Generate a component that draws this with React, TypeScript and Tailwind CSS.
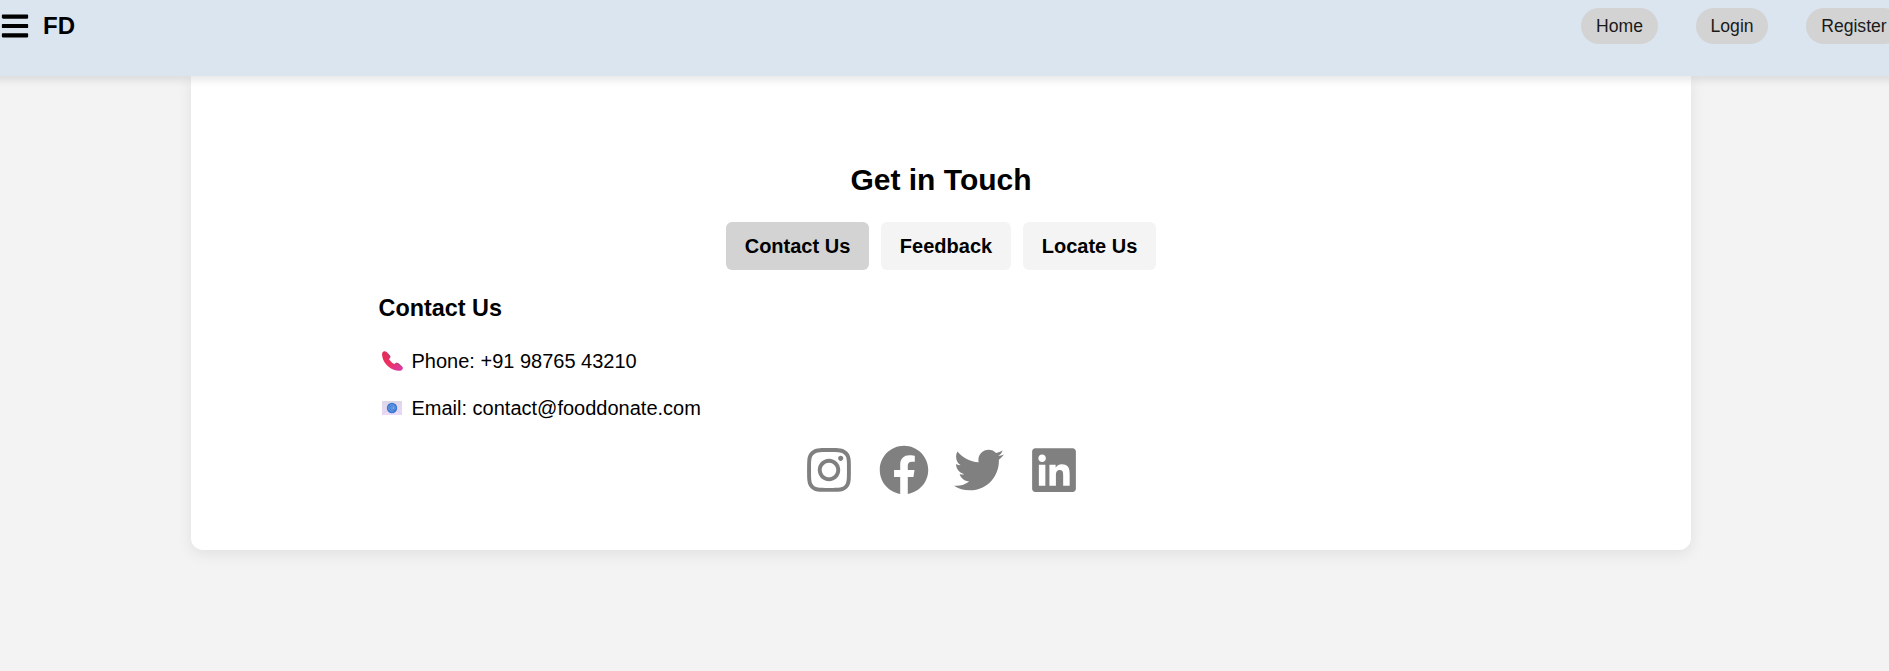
import { FaBars, FaFacebook, FaInstagram, FaLinkedin, FaTwitter } from "react-icons/fa";

const navLinks = ["Home", "Login", "Register"];

const tabs = [
  { label: "Contact Us", box: "w-[143px] bg-[#d3d3d3]" },
  { label: "Feedback", box: "w-[130px] bg-[#f4f4f4]" },
  { label: "Locate Us", box: "w-[133px] bg-[#f4f4f4]" },
];

function PhoneIcon() {
  return (
    <svg width="21" height="20" viewBox="0 0 20 20" preserveAspectRatio="none">
      <defs>
        <linearGradient id="phone" x1="0" y1="0" x2="1" y2="1">
          <stop offset="0" stopColor="#e02a55" />
          <stop offset="0.5" stopColor="#ee3163" />
          <stop offset="1" stopColor="#d63cae" />
        </linearGradient>
      </defs>
      <path
        d="M.6 1.2C1.6-.1 3.4-.1 4.6 1.3L7.4 4.6C8.2 5.6 8 6.6 7.2 7.4L6.6 8.2C7.8 10 9.8 12 11.8 13L12.6 12.3C13.4 11.5 14.8 11.6 15.7 12.4L19 15.2C20.2 16.4 20.2 17.8 19 18.9C17.4 20.2 14 20 11.2 18.8C6.6 16.8 2.6 12.8.9 8C0 5.2-.3 2.6.6 1.2Z"
        fill="url(#phone)"
      />
      <path d="M4.6 1.3L7.4 4.6C8.2 5.6 8 6.6 7.2 7.4ZM12.6 12.3C13.4 11.5 14.8 11.6 15.7 12.4L19 15.2Z" fill="#a8447e" />
    </svg>
  );
}

function MailIcon() {
  return (
    <svg width="20" height="14" viewBox="0 0 20 14">
      <defs>
        <linearGradient id="mail" x1="0" y1="0" x2="0" y2="1">
          <stop offset="0" stopColor="#dcd6e6" />
          <stop offset="1" stopColor="#ecd9f7" />
        </linearGradient>
      </defs>
      <rect width="20" height="14" rx="0.7" fill="url(#mail)" />
      <path d="M0 13.5L8 7H12L20 13.5" fill="#eadcf3" stroke="#dfc5ee" strokeWidth="0.7" />
      <circle cx="10" cy="7" r="5.2" fill="#3577d2" />
      <circle cx="10" cy="7" r="1.3" fill="none" stroke="#a9bdea" strokeWidth="0.6" />
      <path d="M11.5 5.4V7.5C11.5 8.8 13.2 8.5 13.2 7A3.2 3.2 0 1 0 11.7 9.7" fill="none" stroke="#a9bdea" strokeWidth="0.6" />
    </svg>
  );
}

export default function App() {
  return (
    <div className="flex h-[671px] flex-col overflow-hidden bg-[#f3f3f3] font-['Liberation_Sans',Arial,sans-serif] text-black">
      <header className="z-10 -mx-5 flex h-[76px] shrink-0 items-start justify-between bg-[#dbe5ef] px-5 shadow-[0_4px_8px_rgba(0,0,0,0.1)]">
        <div className="flex items-center pt-[11px]">
          <FaBars size={30} />
          <span className="ml-[13px] text-2xl leading-[30px] font-bold">FD</span>
        </div>
        <nav className="-mr-[12.5px] flex gap-[38px] pt-2">
          {navLinks.map((label) => (
            <a key={label} href="#" className="h-9 rounded-full bg-[#d3d3d3] px-[14.8px] text-[17.6px] leading-9 text-[#1a1a1a]">
              {label}
            </a>
          ))}
        </nav>
      </header>

      <main className="ml-[191px] flex h-[474px] w-[1500px] shrink-0 flex-col items-center rounded-b-xl bg-white shadow-[0_4px_15px_rgba(0,0,0,0.08)]">
        <h2 className="mt-[86px] text-[30px] leading-9 font-bold">Get in Touch</h2>
        <div className="mt-6 flex gap-3">
          {tabs.map((tab) => (
            <button key={tab.label} className={`h-12 rounded-md text-xl font-bold ${tab.box}`}>
              {tab.label}
            </button>
          ))}
        </div>
        <section className="mt-6 w-[1125px]">
          <h3 className="text-[23.4px] leading-7 font-bold">Contact Us</h3>
          <p className="mt-6 flex h-[30px] items-center text-xl">
            <span className="flex w-[33px] pl-[3px]"><PhoneIcon /></span>
            Phone: +91 98765 43210
          </p>
          <p className="mt-[17px] flex h-[30px] items-center text-xl">
            <span className="flex w-[33px] pl-[3px]"><MailIcon /></span>
            Email: contact@fooddonate.com
          </p>
        </section>
        <div className="mt-[22px] flex gap-[25px] text-[#808080]">
          <FaInstagram size={50} />
          <FaFacebook size={50} />
          <FaTwitter size={50} />
          <FaLinkedin size={50} />
        </div>
      </main>
    </div>
  );
}
